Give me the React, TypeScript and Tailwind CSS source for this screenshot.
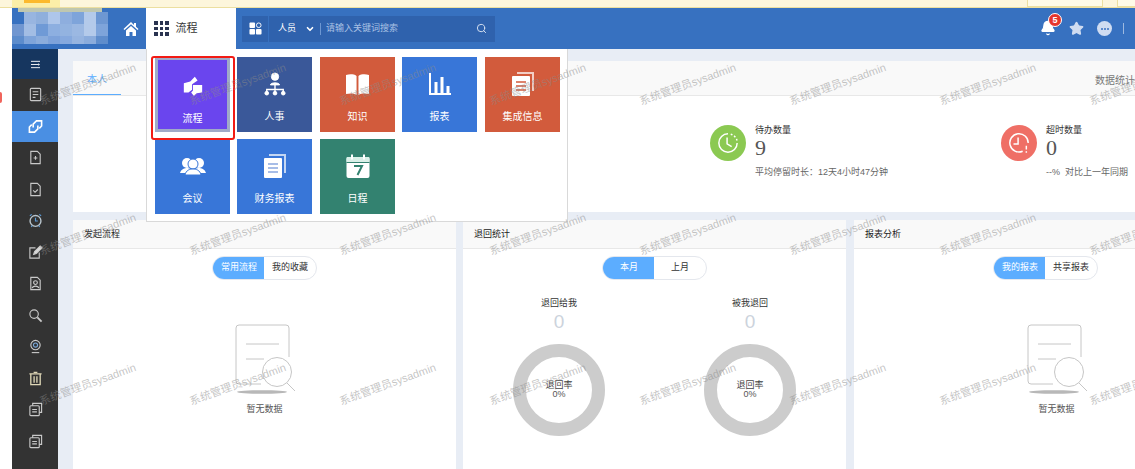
import { Bell, ChevronDown, Search, Star } from "lucide-react";
import type { ReactNode } from "react";

const logoColors = [
  "#3771c0", "#98b5e0", "#8fafdc", "#aec6ea", "#8eaede", "#7ea4da", "#b4caea", "#6d97d2",
  "#7096d0", "#a2bde4", "#6f9ad6", "#8dafe0", "#93b3e0", "#9bb8e2", "#b4caea", "#7ea4da",
  "#5c8ccc", "#7ea4da", "#8aacdc", "#7da2da", "#86a9de", "#96b4e0", "#8bacdc", "#5f8dcc",
];

const Glyph = ({ children, color = "#c9c9c9" }: { children: ReactNode; color?: string }) => (
  <svg viewBox="0 0 16 16" className="w-[15px] h-[15px]" fill="none" stroke={color} strokeWidth="1.2">
    {children}
  </svg>
);

const sideIcons: ReactNode[] = [
  <Glyph><rect x="2.5" y="1.5" width="11" height="13" rx="1" /><path d="M5 5h6M5 8h6M5 11h3" /></Glyph>,
  <Glyph color="#fff"><path d="M5.5 9V5.5L9 2h5.5v5.5L12 10" strokeWidth="1.7" /><path d="M10.5 7v3.5L7 14H1.5V8.5L4 6" strokeWidth="1.7" /></Glyph>,
  <Glyph><path d="M3 1.5h7l3 3v10H3zM8 6.5v4M6 8.5h4" /></Glyph>,
  <Glyph><path d="M3 1.5h7l3 3v10H3zM5.5 9l2 2 3-3" /></Glyph>,
  <Glyph color="#b8c4cc"><circle cx="8" cy="8.5" r="5.8" strokeWidth="1.5" /><path d="M8 5v3.5h2.5M2 3l2-1.5M14 3l-2-1.5M3.5 15l1-1.5M12.5 15l-1-1.5" stroke="#5b9bd8" /></Glyph>,
  <Glyph><path d="M12 8v6H2V3h6" /><path d="M6 10l1-3 6-6 2 2-6 6z" fill="#ddd" /></Glyph>,
  <Glyph><path d="M3 1.5h7l3 3v10H3z" /><circle cx="8" cy="7" r="2" /><path d="M4.5 13c.5-3 6.5-3 7 0" /></Glyph>,
  <Glyph><circle cx="6.5" cy="6.5" r="4.5" /><path d="M10 10l4.5 4.5" strokeWidth="2" /></Glyph>,
  <Glyph><circle cx="8" cy="6.5" r="5" /><circle cx="8" cy="6.5" r="2.2" stroke="#7aa6d6" /><path d="M4 14.5h8" /></Glyph>,
  <Glyph color="#e0d8b8"><path d="M1.5 3h13M3 3v11.5h10V3M6 1.5h4M6.5 5.5v7M9.5 5.5v7" strokeWidth="1.4" /></Glyph>,
  <Glyph><rect x="2" y="4" width="10" height="10.5" rx="1" /><path d="M5 4V1.5h9.5V11H12M4.5 8h5M4.5 10.5h5" /></Glyph>,
  <Glyph><rect x="2" y="4" width="10" height="10.5" rx="1" /><path d="M5 4V1.5h9.5V11H12M4.5 8h5M4.5 10.5h5" /></Glyph>,
];

const Sidebar = () => (
  <aside className="w-[46px] shrink-0 bg-[#333333] flex flex-col">
    <div className="h-[30px] bg-[#16365f] flex items-center justify-center">
      <svg viewBox="0 0 12 10" className="w-[11px] h-[9px]" stroke="#fff" strokeWidth="1" fill="#fff">
        <path d="M1 1.5h10M1 5h8M1 8.5h10" />
        <path d="M9 3.5l2 1.5-2 1.5z" stroke="none" />
      </svg>
    </div>
    {sideIcons.map((icon, i) => (
      <div
        key={i}
        className={`h-[31.5px] flex items-center justify-center ${i === 1 ? "bg-[#4a8fe3]" : ""}`}
      >
        {icon}
      </div>
    ))}
  </aside>
);

const Header = () => (
  <header className="h-[41px] bg-[#3771c0] flex items-center">
    <div className="w-[96px] h-full">
      <div className="ml-[6px] w-[84px] h-[4px] bg-[#bfc7b0]" />
      <div className="grid grid-cols-8 grid-rows-[12px_12px_8px] w-[96px]">
        {logoColors.map((c, i) => (
          <div key={i} style={{ background: c }} />
        ))}
      </div>
    </div>
    <div className="w-[38px] flex justify-end pr-[7px]">
      <svg viewBox="0 0 16 16" className="w-[16px] h-[16px]" fill="#fff">
        <path d="M8 1L0.5 8l1 1L8 3.2 14.5 9l1-1-2.5-2.3V2h-2v1.9z" />
        <path d="M3 9.5L8 5l5 4.5V15H9.5v-4h-3v4H3z" />
      </svg>
    </div>
    <div className="w-[90px] h-full bg-white flex items-center pl-[8px] gap-[7px]">
      <div className="grid grid-cols-3 gap-[2px]">
        {Array.from({ length: 9 }).map((_, i) => (
          <div key={i} className="w-[3.5px] h-[3.5px] bg-[#2a3350]" />
        ))}
      </div>
      <span className="text-[11px] text-[#333]">流程</span>
    </div>
    <div className="w-[253px] h-[26px] ml-[6px] bg-[#2f62ad] flex items-center">
      <div className="w-[27px] h-full flex items-center justify-center border-r border-[#3771c0]">
        <svg viewBox="0 0 14 14" className="w-[13px] h-[13px]" fill="#fff">
          <rect x="0.5" y="0.5" width="6" height="6" rx="1" />
          <rect x="0.5" y="7.5" width="6" height="6" rx="1" />
          <rect x="7.5" y="7.5" width="6" height="6" rx="1" />
          <circle cx="10.5" cy="3.5" r="2.5" fill="none" stroke="#fff" />
        </svg>
      </div>
      <span className="ml-[9px] text-[9px] text-white">人员</span>
      <ChevronDown size={10} stroke="#fff" strokeWidth={4} className="ml-[9px]" />
      <div className="w-px h-[12px] bg-[#6d97d2] ml-[5px]" />
      <span className="ml-[5px] text-[9px] text-[#a9c1e4]">请输入关键词搜索</span>
      <Search size={11} stroke="#dfe8f5" strokeWidth={2} className="ml-auto mr-[8px]" />
    </div>
    <div className="ml-auto flex items-center pr-[11px]">
      <div className="relative w-[17px] h-[17px]">
        <Bell size={16} fill="#fff" stroke="#fff" />
        <span className="absolute -top-[7px] left-[8px] w-[14px] h-[14px] rounded-full bg-[#e5352d] border border-white text-white text-[9px] leading-[12px] text-center font-bold">
          5
        </span>
      </div>
      <Star size={15} fill="#cfdcf1" stroke="#cfdcf1" className="ml-[12px]" />
      <div className="ml-[13px] w-[15px] h-[15px] rounded-full bg-[#cfdcf1] flex items-center justify-center gap-[1px]">
        <i className="w-[2px] h-[2px] rounded-full bg-[#3771c0]" />
        <i className="w-[2px] h-[2px] rounded-full bg-[#3771c0]" />
        <i className="w-[2px] h-[2px] rounded-full bg-[#3771c0]" />
      </div>
      <div className="ml-[11px] w-px h-[11px] bg-[#9db9e0]" />
    </div>
  </header>
);

const Tile = ({ label, bg, icon, mr }: { label: string; bg: string; icon: ReactNode; mr?: string }) => (
  <div className={`w-[75px] h-[75px] shrink-0 flex flex-col items-center text-white ${bg} ${mr ?? ""}`}>
    <div className="h-[50px] flex items-center justify-center pt-[4px]">{icon}</div>
    <span className="text-[10px] leading-[14px] mt-[3px]">{label}</span>
  </div>
);

const Docs = () => (
  <svg viewBox="0 0 26 26" className="w-[26px] h-[26px]">
    <path d="M7 1h17v19h-2V3H7z" fill="#fff" opacity="0.7" />
    <rect x="2" y="5" width="18" height="20" rx="1" fill="#fff" />
    <path d="M6 11h10M6 15h10M6 19h10" stroke="currentColor" strokeWidth="1.4" />
  </svg>
);

const Menu = () => (
  <div className="absolute left-[146px] top-[49px] w-[422px] h-[173px] z-20 bg-white border-r border-b border-l border-[#d9d9d9]">
    <div className="relative pl-[8px] pt-[8px] flex flex-col gap-[7px]">
      <div className="flex">
        <div className="w-[75px] h-[75px] shrink-0 mr-[7px] bg-[#a0aac8] pl-[3px] pt-[3px]">
          <div className="w-[69px] h-[69px] bg-[#6a45ee] flex flex-col items-center text-white">
            <div className="h-[45px] flex items-center justify-center pt-[6px]">
              <svg viewBox="0 0 24 24" className="w-[22px] h-[22px]" fill="#fff">
                <path d="M2 9l7-2 5-5 3 4-6 4v6l-4 3H2z" />
                <path d="M12 11h10v8l-6 1-3 3-3-4 2-2z" />
              </svg>
            </div>
            <span className="text-[10px] leading-[14px] mt-[7px]">流程</span>
          </div>
        </div>
        <Tile
          label="人事"
          bg="bg-[#3a5899]"
          mr="mr-[8px]"
          icon={
            <svg viewBox="0 0 24 26" className="w-[22px] h-[24px]" fill="#fff" stroke="#fff">
              <circle cx="12" cy="5" r="4" />
              <path d="M7 14c0-3 10-3 10 0z" />
              <path d="M12 14v5M3 22v-3h18v3M12 19v3" fill="none" strokeWidth="1.5" />
              <circle cx="3" cy="23" r="2" />
              <circle cx="12" cy="23" r="2" />
              <circle cx="21" cy="23" r="2" />
            </svg>
          }
        />
        <Tile
          label="知识"
          bg="bg-[#d25b3c]"
          mr="mr-[7px]"
          icon={
            <svg viewBox="0 0 26 24" className="w-[25px] h-[23px]" fill="#fff">
              <path d="M1 2c4-1 8-1 11 1v20c-3-2-7-2-11-1z" />
              <path d="M25 2c-4-1-8-1-11 1v20c3-2 7-2 11-1z" />
            </svg>
          }
        />
        <Tile
          label="报表"
          bg="bg-[#3876d8]"
          mr="mr-[8px]"
          icon={
            <svg viewBox="0 0 24 24" className="w-[24px] h-[24px]" fill="none" stroke="#fff" strokeWidth="2">
              <path d="M2 1v21h21" />
              <path d="M8 21V10M14 21V5M20 21v-7" strokeWidth="3" />
            </svg>
          }
        />
        <Tile
          label="集成信息"
          bg="bg-[#d25b3c]"
          icon={
            <span className="text-[#d25b3c]">
              <Docs />
            </span>
          }
        />
      </div>
      <div className="flex">
        <Tile
          label="会议"
          bg="bg-[#3876d8]"
          mr="mr-[7px]"
          icon={
            <svg viewBox="0 0 26 20" className="w-[26px] h-[20px]" fill="#fff">
              <circle cx="7" cy="7" r="5" />
              <circle cx="19" cy="7" r="5" />
              <path d="M0 17c1-4 5-5 7-5s6 1 6 5zM13 17c0-4 4-5 6-5s6 1 7 5z" />
              <circle cx="13" cy="8" r="5" stroke="#3876d8" />
              <path d="M5 19c1-5 5-6 8-6s7 1 8 6z" stroke="#3876d8" />
            </svg>
          }
        />
        <Tile
          label="财务报表"
          bg="bg-[#3876d8]"
          mr="mr-[8px]"
          icon={
            <span className="text-[#8aa8e0]">
              <Docs />
            </span>
          }
        />
        <Tile
          label="日程"
          bg="bg-[#338270]"
          icon={
            <svg viewBox="0 0 24 24" className="w-[24px] h-[24px]">
              <rect x="0.5" y="3" width="23" height="21" rx="2" fill="#fff" />
              <rect x="0.5" y="3" width="23" height="5" rx="1" fill="#d9f0e8" />
              <path d="M0.5 8.5h23" stroke="#338270" />
              <path d="M6 0.5v5M18 0.5v5" stroke="#fff" strokeWidth="2" />
              <path d="M8 12h8l-4.5 9" fill="none" stroke="#338270" strokeWidth="2" />
            </svg>
          }
        />
      </div>
      <div className="absolute left-[4px] top-[7px] w-[84px] h-[84px] rounded-[3px] border-[2px] border-[#f21a14]" />
    </div>
  </div>
);

const Stat = ({ label, value, foot, bg, mark }: { label: string; value: string; foot: string; bg: string; mark: ReactNode }) => (
  <div className="flex items-start">
    <div className={`w-[36px] h-[36px] rounded-full mt-[2px] flex items-center justify-center ${bg}`}>{mark}</div>
    <div className="ml-[9px]">
      <div className="text-[9px] leading-[12px] text-[#333] mt-[1px]">{label}</div>
      <div className="text-[22px] leading-[24px] text-[#555] font-['Liberation_Serif',serif]">{value}</div>
      <div className="text-[9px] leading-[12px] text-[#666] mt-[6px] whitespace-pre">{foot}</div>
    </div>
  </div>
);

const Panel = ({ title, className, children }: { title: string; className: string; children: ReactNode }) => (
  <section className={`bg-white ${className}`}>
    <div className="h-[29px] bg-[#f9f9f9] border-b border-[#e8e8e8] flex items-center pl-[11px] pt-[2px] text-[9px] text-[#222]">
      {title}
    </div>
    {children}
  </section>
);

const Toggle = ({ a, b }: { a: string; b: string }) => (
  <div className="flex justify-center mt-[7px]">
    <div className="flex h-[24px] rounded-full border border-[#e4e7ed] text-[9px] overflow-hidden">
      <span className="bg-[#5cadff] text-white flex items-center justify-center w-[51px] pl-[1px]">{a}</span>
      <span className="text-[#333] flex items-center justify-center w-[52px]">{b}</span>
    </div>
  </div>
);

const Empty = ({ className = "" }: { className?: string }) => (
  <div className={`flex flex-col items-center mt-[44px] ${className}`}>
    <svg viewBox="0 0 62 72" className="w-[62px] h-[72px] ml-[3px]" fill="none" stroke="#c6c6c6">
      <path d="M26 60H4a3 3 0 0 1-3-3V4a3 3 0 0 1 3-3h47a3 3 0 0 1 3 3v29" />
      <path d="M11 20h33M11 35h18" />
      <circle cx="42" cy="48" r="14.5" />
      <path d="M52 59l8 8" />
      <ellipse cx="27" cy="68" rx="25" ry="1.8" fill="#b8b8b8" stroke="none" />
    </svg>
    <span className="text-[9px] text-[#555] mt-[7px]">暂无数据</span>
  </div>
);

const Donut = ({ title }: { title: string }) => (
  <div className="w-[92px] flex flex-col items-center">
    <div className="text-[9px] leading-[12px] text-[#333]">{title}</div>
    <div className="text-[19px] leading-[22px] mt-[2px] text-[#ccd3dc]">0</div>
    <div className="relative mt-[11px] w-[92px] h-[92px] rounded-full border-[13px] border-[#cccccc] flex flex-col items-center justify-center">
      <span className="text-[9px] leading-[9px] text-[#444]">退回率</span>
      <span className="text-[9px] leading-[9px] text-[#555]">0%</span>
    </div>
  </div>
);

const Watermark = () => (
  <div className="absolute inset-0 z-30 overflow-hidden pointer-events-none grid grid-cols-[repeat(8,150px)] auto-rows-[150px] pl-[13px] pt-[9px]">
    {Array.from({ length: 24 }).map((_, i) => (
      <div key={i} className="flex items-center justify-center w-[150px] h-[150px]">
        <span className="text-[11px] text-[#8a8a8a]/50 -rotate-[20deg] whitespace-nowrap">系统管理员sysadmin</span>
      </div>
    ))}
  </div>
);

export default function App() {
  return (
    <div className="relative w-[1135px] h-[469px] overflow-hidden bg-white font-['Liberation_Sans','Noto_Sans_CJK_SC',sans-serif]">
      <div className="h-[8px] bg-[#fdf6dc] border-b border-[#ecdfa0] flex">
        <div className="ml-[12px] w-[48px] h-full bg-[#fbeea8] pl-[12px]">
          <div className="w-[26px] h-[3px] bg-[#fbb92d]" />
        </div>
        <div className="ml-auto w-[76px] h-full border-x border-b border-[#ecdfa0] bg-[#fffbe8]" />
        <div className="ml-[14px] w-[18px] h-full border-l border-b border-[#ecdfa0] bg-[#fffbe8]" />
      </div>
      <div className="ml-[12px]">
        <Header />
        <div className="flex h-[420px]">
          <Sidebar />
          <main className="flex-1 bg-[#e8edf5] pl-[15px] pt-[12px] flex flex-col overflow-hidden">
            <section className="h-[151px] bg-white shrink-0 w-[1062px]">
              <div className="h-[35px] bg-[#f9f9f9] border-b border-[#e8e8e8] flex justify-between">
                <div className="w-[48px] border-b border-[#5cadff] flex items-center justify-center pt-[3px] text-[10px] text-[#5cadff]">
                  本人
                </div>
                <span className="text-[10px] text-[#777] leading-[40px] w-[40px] whitespace-nowrap">数据统计范围</span>
              </div>
              <div className="flex pt-[27px] pl-[637px]">
                <Stat
                  label="待办数量"
                  value="9"
                  foot="平均停留时长：12天4小时47分钟"
                  bg="bg-[#8bc952]"
                  mark={
                    <svg viewBox="0 0 24 24" className="w-[22px] h-[22px]" fill="none" stroke="#fff" strokeWidth="1.6">
                      <path d="M12 2a10 10 0 1 0 10 10" />
                      <path d="M15 2.5a10 10 0 0 1 7 7" strokeDasharray="2 2" />
                      <path d="M11 6v7l5 3" />
                    </svg>
                  }
                />
                <div className="ml-[113px]">
                  <Stat
                    label="超时数量"
                    value="0"
                    foot="--%  对比上一年同期"
                    bg="bg-[#ef6f66]"
                    mark={
                      <svg viewBox="0 0 24 24" className="w-[22px] h-[22px]" fill="none" stroke="#fff" strokeWidth="1.6">
                        <path d="M16 21a10 10 0 1 1 6-9" />
                        <path d="M11 6v7H6M20 15v4M20 21v1.5" />
                      </svg>
                    }
                  />
                </div>
              </div>
            </section>
            <div className="flex gap-[7px] mt-[8px] flex-1">
              <Panel title="发起流程" className="w-[383px] shrink-0">
                <Toggle a="常用流程" b="我的收藏" />
                <Empty />
              </Panel>
              <Panel title="退回统计" className="w-[383px] shrink-0">
                <Toggle a="本月" b="上月" />
                <div className="flex pl-[50px] gap-[99px] mt-[17px]">
                  <Donut title="退回给我" />
                  <Donut title="被我退回" />
                </div>
              </Panel>
              <Panel title="报表分析" className="w-[383px] shrink-0 ml-[1px]">
                <Toggle a="我的报表" b="共享报表" />
                <Empty className="pl-[22px]" />
              </Panel>
            </div>
          </main>
        </div>
      </div>
      <div className="absolute left-0 top-[92px] w-[2px] h-[11px] rounded-r-full bg-[#f0645c]" />
      <Menu />
      <Watermark />
    </div>
  );
}
